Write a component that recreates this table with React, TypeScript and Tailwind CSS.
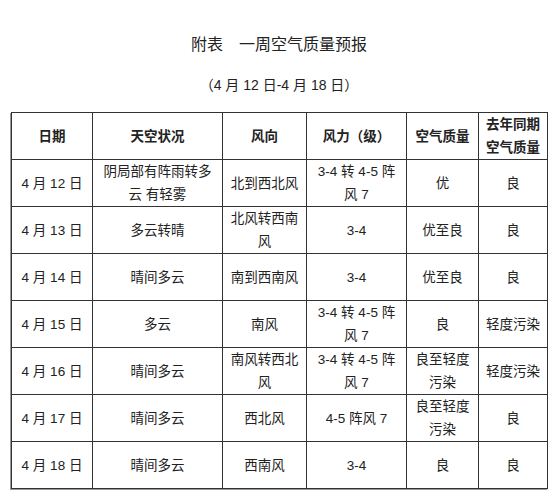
import React from 'react';

const rows = [
  { date: '4 月 12 日', sky: '阴局部有阵雨转多云 有轻雾', wind: '北到西北风', force: '3-4 转 4-5 阵风 7', aq: '优', last: '良' },
  { date: '4 月 13 日', sky: '多云转晴', wind: '北风转西南风', force: '3-4', aq: '优至良', last: '良' },
  { date: '4 月 14 日', sky: '晴间多云', wind: '南到西南风', force: '3-4', aq: '优至良', last: '良' },
  { date: '4 月 15 日', sky: '多云', wind: '南风', force: '3-4 转 4-5 阵风 7', aq: '良', last: '轻度污染' },
  { date: '4 月 16 日', sky: '晴间多云', wind: '南风转西北风', force: '3-4 转 4-5 阵风 7', aq: '良至轻度污染', last: '轻度污染' },
  { date: '4 月 17 日', sky: '晴间多云', wind: '西北风', force: '4-5 阵风 7', aq: '良至轻度污染', last: '良' },
  { date: '4 月 18 日', sky: '晴间多云', wind: '西南风', force: '3-4', aq: '良', last: '良' },
];

const cell = 'border border-[#333] text-center align-middle leading-[23px]';

export default function App() {
  return (
    <div
      className="w-[558px] h-[500px] bg-white pt-[34px] text-[#222]"
      style={{ fontFamily: '"Liberation Sans", "Noto Sans CJK SC", sans-serif' }}
    >
      <h1 className="text-center text-[16px] leading-[22px]">附表　一周空气质量预报</h1>
      <p className="mt-[18px] text-center text-[14px] leading-[22px]">（4 月 12 日-4 月 18 日）</p>

      <table className="mt-[16px] ml-[11px] w-[536px] table-fixed border-collapse text-[13.5px] shadow-[-1px_1px_0_#999]">
        <colgroup>
          <col className="w-[81px]" />
          <col className="w-[130px]" />
          <col className="w-[84px]" />
          <col className="w-[100px]" />
          <col className="w-[72px]" />
          <col className="w-[69px]" />
        </colgroup>
        <thead>
          <tr className="h-[47px] font-bold">
            <th className={cell + ' px-1'}>日期</th>
            <th className={cell + ' px-2'}>天空状况</th>
            <th className={cell + ' px-1'}>风向</th>
            <th className={cell + ' px-1'}>风力（级）</th>
            <th className={cell + ' px-1'}>空气质量</th>
            <th className={cell + ' px-1 leading-[22px]'}>去年同期空气质量</th>
          </tr>
        </thead>
        <tbody>
          {rows.map(r => (
            <tr key={r.date} className="h-[47px]">
              <td className={cell + ' px-1 whitespace-nowrap'}>{r.date}</td>
              <td className={cell + ' px-2'}>{r.sky}</td>
              <td className={cell + ' px-1'}>{r.wind}</td>
              <td className={cell + ' px-2'}>{r.force}</td>
              <td className={cell + ' px-1'}>{r.aq}</td>
              <td className={cell + ' px-1'}>{r.last}</td>
            </tr>
          ))}
        </tbody>
      </table>
    </div>
  );
}
